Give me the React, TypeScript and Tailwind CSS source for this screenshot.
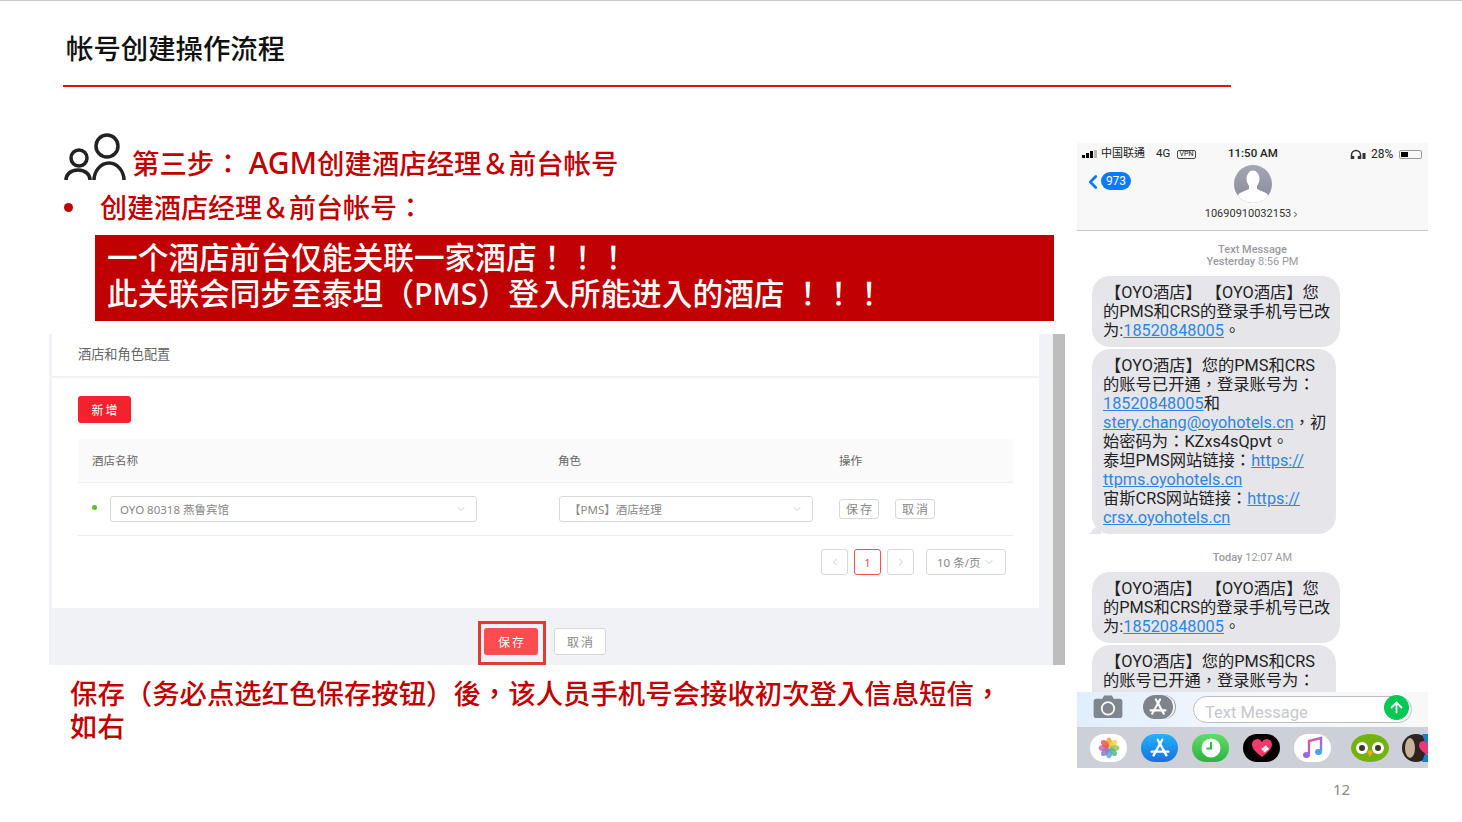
import { ArrowUp, ChevronDown, ChevronLeft, ChevronRight } from 'lucide-react';

const cjk = 'font-["Noto_Sans","Noto_Sans_CJK_TC",sans-serif]';
const admin = 'font-["Noto_Sans","Noto_Sans_CJK_SC",sans-serif]';
const ios = 'font-["Roboto","Noto_Sans_CJK_TC",sans-serif]';

function GroupIcon() {
  return (
    <svg width="63" height="47" viewBox="0 0 63 47" fill="none" stroke="#222" strokeWidth="3.500">
      <circle cx="16" cy="25" r="8" />
      <circle cx="44" cy="13" r="11" />
      <path d="M3 47c0-5 4-10 12-10s12 5 12 10" />
      <path d="M31 47c0-8 6-17 15-17s15 9 15 17" />
    </svg>
  );
}

function AppStoreGlyph({ color = 'white', size = 22 }: { color?: string; size?: number }) {
  return (
    <svg width={size} height={size} viewBox="0 0 24 24" fill="none" stroke={color} strokeWidth="2.600" strokeLinecap="round">
      <path d="M14.500 3 5 20" />
      <path d="M9.500 3 19 20" />
      <path d="M3 16h18" />
    </svg>
  );
}

function CameraGlyph() {
  return (
    <svg className="-mt-[7px]" width="30" height="23" viewBox="0 0 30 24">
      <path d="M3 4h6l2-3.500h8L21 4h6a3 3 0 0 1 3 3v14a3 3 0 0 1-3 3H3a3 3 0 0 1-3-3V7a3 3 0 0 1 3-3Z" fill="#80868e" />
      <circle cx="15" cy="14" r="6.500" fill="none" stroke="white" strokeWidth="1.800" />
    </svg>
  );
}

function PhotosGlyph() {
  const petals = ['#f0a33a', '#f5d33e', '#9bc94b', '#57b98a', '#5aa8dc', '#8a7ac8', '#c468a8', '#e8584f'];
  return (
    <svg width="22" height="22" viewBox="0 0 24 24">
      {petals.map((c, i) => (
        <ellipse key={c} cx="12" cy="6" rx="3.400" ry="5.400" fill={c} opacity="0.85" transform={`rotate(${i * 45} 12 12)`} />
      ))}
    </svg>
  );
}

function HeartGlyph() {
  return (
    <svg width="22" height="20" viewBox="0 0 24 22">
      <path d="M12 21C5 15.500 1 12 1 7a5.800 5.800 0 0 1 11-2.500A5.800 5.800 0 0 1 23 7c0 5-4 8.500-11 14Z" fill="#f2386c" />
      <path d="m12 13 5-4m-3 6 5-4" stroke="white" strokeWidth="2.500" />
    </svg>
  );
}

function MusicGlyph() {
  return (
    <svg width="24" height="24" viewBox="0 0 24 24">
      <defs>
        <linearGradient id="note" x1="0" y1="0" x2="1" y2="1">
          <stop offset="0" stopColor="#f2557a" />
          <stop offset="0.6" stopColor="#a066e0" />
          <stop offset="1" stopColor="#4aa0ec" />
        </linearGradient>
      </defs>
      <path d="M8 18V5l12-3v13" fill="none" stroke="url(#note)" strokeWidth="2.400" />
      <ellipse cx="5.500" cy="19" rx="3.500" ry="3" fill="#9a66e4" />
      <ellipse cx="17.500" cy="16" rx="3.500" ry="3" fill="#4aa0ec" />
    </svg>
  );
}

function OwlGlyph() {
  return (
    <svg width="38" height="28" viewBox="0 0 38 28">
      <ellipse cx="19" cy="14" rx="19" ry="14" fill="#74b30f" />
      <circle cx="11" cy="14" r="6" fill="white" />
      <circle cx="27" cy="14" r="6" fill="white" />
      <circle cx="11" cy="14" r="3" fill="#3a3a2a" />
      <circle cx="27" cy="14" r="3" fill="#3a3a2a" />
      <path d="m16 18 3-2 3 2-3 5Z" fill="#f5a623" />
    </svg>
  );
}

function MixedGlyph() {
  return (
    <svg width="38" height="28" viewBox="0 0 38 28">
      <ellipse cx="14" cy="14" rx="14" ry="14" fill="#2d2320" />
      <ellipse cx="8" cy="14" rx="5" ry="10" fill="#c9b29c" />
      <path d="M20 0h10l-5 14 5 14H20l5-14Z" fill="#1583cc" />
      <path d="M25 21c-5-4-8-6-8-10a4.200 4.200 0 0 1 8-1.500 4.200 4.200 0 0 1 8 1.500c0 4-3 6-8 10Z" fill="#f0357a" />
    </svg>
  );
}

function Avatar() {
  return (
    <div className="w-[38px] h-[38px] rounded-full bg-gradient-to-b from-[#a4a8b4] to-[#868a98] overflow-hidden">
      <svg width="38" height="38" viewBox="0 0 38 38" fill="white">
        <ellipse cx="19" cy="14" rx="6.500" ry="8.500" />
        <path d="M15 20h8v4l9 4c2 1 3 5 3 10H3c0-5 1-9 3-10l9-4Z" />
      </svg>
    </div>
  );
}

function Link({ children }: { children: string }) {
  return <span className="text-[#2f86e0] underline">{children}</span>;
}

function Bubble({ children, width, tail }: { children: React.ReactNode; width: string; tail?: boolean }) {
  return (
    <div className={`relative ${width} shrink-0 rounded-[18px] bg-[#e5e5ea] px-[11px] py-[7px] text-[16.300px] leading-[19px] text-[#222] whitespace-pre`}>
      {children}
      {tail && (
        <svg className="absolute left-[-5px] bottom-0" width="14" height="9" viewBox="0 0 14 9" fill="#e5e5ea">
          <path d="M0 9c3 0 5-2 6-5l8-4v9Z" />
        </svg>
      )}
    </div>
  );
}

function Stamp({ children }: { children: React.ReactNode }) {
  return <div className="text-center text-[11px] leading-[12px] text-[#9a9aa0]">{children}</div>;
}

function FirstNotice() {
  return (
    <Bubble width="w-[248px]">
      <div className="pl-[2px]">【OYO酒店】 【OYO酒店】您</div>
      <div>的PMS和CRS的登录手机号已改</div>
      <div>为:<Link>18520848005</Link>。</div>
    </Bubble>
  );
}

function PhoneShot() {
  const dock = [
    { bg: 'bg-white', icon: <PhotosGlyph /> },
    { bg: 'bg-gradient-to-b from-[#27b2f8] to-[#1a6fe0]', icon: <AppStoreGlyph /> },
    { bg: 'bg-gradient-to-b from-[#5fdc6a] to-[#28b43e]', icon: (
      <svg width="20" height="20" viewBox="0 0 20 20">
        <circle cx="10" cy="10" r="9.500" fill="white" />
        <path d="M10 4v6.500H5.500" fill="none" stroke="#2fbb45" strokeWidth="2" />
      </svg>
    ) },
    { bg: 'bg-black', icon: <HeartGlyph /> },
    { bg: 'bg-white', icon: <MusicGlyph /> },
  ];

  return (
    <div className={`w-[351px] h-[625px] flex flex-col overflow-hidden bg-white ${ios}`}>
      <div className="h-[88px] shrink-0 bg-[#f8f8f8] border-b border-[#c8c8c8] flex flex-col">
        <div className="flex h-[21px] pt-[1px] items-center pl-[5px] pr-[6px] text-[11.500px] text-[#222] whitespace-nowrap">
          <div className="flex items-end gap-[1px] h-[8px]">
            <span className="w-[3px] h-[3px] bg-black" />
            <span className="w-[3px] h-[5px] bg-black" />
            <span className="w-[3px] h-[7px] bg-black" />
            <span className="w-[3px] h-[8px] bg-[#b8b8b8]" />
          </div>
          <span className="ml-[4px] w-[45px] text-[11px]">中国联通</span>
          <span className="ml-[10px] w-[15px]">4G</span>
          <span className="ml-[6px] w-[19px] h-[9px] border border-[#444] rounded-[2px] text-[7px] leading-[7px] text-center">VPN</span>
          <span className="ml-[32px] w-[50px] font-medium">11:50 AM</span>
          <svg className="ml-[72px]" width="16" height="11" viewBox="0 0 16 11" fill="none" stroke="#333" strokeWidth="1.500">
            <path d="M1.500 10V6a4.500 4.500 0 0 1 9 0v4" />
            <path d="M3 7v3M9 7v3" strokeWidth="2.500" />
            <path d="M14 4v6" strokeWidth="3" />
          </svg>
          <span className="ml-[5px] w-[24px] text-[12px]">28%</span>
          <div className="ml-[4px] w-[23px] h-[9px] border border-[#999] rounded-[2px] p-[1px]">
            <div className="w-[7px] h-full bg-black" />
          </div>
        </div>
        <div className="grid grid-cols-3 flex-1">
          <div className="flex items-start pl-[8px] pt-[8px]">
            <ChevronLeft className="w-[22px] h-[22px] text-[#0a7aff] -ml-[3px] -mt-[1px]" strokeWidth={3} />
            <span className="-ml-[3px] w-[30px] h-[18px] rounded-full bg-[#0a7aff] text-white text-[12px] leading-[18px] text-center">973</span>
          </div>
          <div className="flex flex-col items-center pt-[1px]">
            <Avatar />
            <div className="mt-[5px] flex items-center text-[11px] leading-[12px] text-[#333] whitespace-nowrap">
              10690910032153
              <ChevronRight className="w-[9px] h-[9px] text-[#888]" strokeWidth={3} />
            </div>
          </div>
        </div>
      </div>

      <div className="h-[461px] shrink-0 overflow-hidden px-[15px] pt-[13px] flex flex-col">
        <Stamp><b className="font-medium">Text Message</b></Stamp>
        <Stamp><b className="font-medium">Yesterday</b> 8:56 PM</Stamp>
        <div className="mt-[8px] flex flex-col gap-[2px]">
          <FirstNotice />
          <Bubble width="w-[244px]" tail>
            <div className="pl-[2px]">【OYO酒店】您的PMS和CRS</div>
            <div>的账号已开通，登录账号为：</div>
            <div><Link>18520848005</Link>和</div>
            <div><Link>stery.chang@oyohotels.cn</Link>，初</div>
            <div>始密码为：KZxs4sQpvt。</div>
            <div>泰坦PMS网站链接：<Link>https://</Link></div>
            <div><Link>ttpms.oyohotels.cn</Link></div>
            <div>宙斯CRS网站链接：<Link>https://</Link></div>
            <div><Link>crsx.oyohotels.cn</Link></div>
          </Bubble>
        </div>
        <div className="mt-[18px]">
          <Stamp><b className="font-medium">Today</b> 12:07 AM</Stamp>
        </div>
        <div className="mt-[8px] flex flex-col gap-[2px]">
          <FirstNotice />
          <Bubble width="w-[244px]">
            <div className="pl-[2px]">【OYO酒店】您的PMS和CRS</div>
            <div>的账号已开通，登录账号为：</div>
            <div>&nbsp;</div>
          </Bubble>
        </div>
      </div>

      <div className="h-[35px] shrink-0 bg-gradient-to-r from-[#e0eefc] via-[#f4f8fc] to-[#f8f8f8] flex items-center pl-[16px]">
        <CameraGlyph />
        <div className="ml-[20px] w-[30px] h-[24px] rounded-full bg-[#7e838c] flex items-center justify-center -mt-[6px] shadow-[2px_0_0_#f8f8f8,3px_0_0_#9a9ea6]">
          <AppStoreGlyph size={20} />
        </div>
        <div className="ml-[20px] w-[219px] h-[27px] rounded-full border border-[#bcbcc0] bg-white flex items-center justify-between pl-[11px] text-[16.500px] text-[#c7c7cc]">
          <span className="pt-[8px]">Text Message</span>
          <span className="w-[25px] h-[25px] -mt-[5px] mr-[2px] rounded-full bg-[#00c853] flex items-center justify-center">
            <ArrowUp className="w-[17px] h-[17px] text-white" strokeWidth={2.500} />
          </span>
        </div>
      </div>

      <div className="h-[41px] shrink-0 bg-[#cdd0d6] flex items-center pl-[13px]">
        {dock.map((d, i) => (
          <div key={i} className={`w-[37px] h-[28px] mr-[14px] shrink-0 rounded-full flex items-center justify-center ${d.bg}`}>
            {d.icon}
          </div>
        ))}
        <span className="w-[1px] h-[24px] bg-[#aaaeb4] mr-[9px] -ml-[3px]" />
        <div className="shrink-0 mr-[13px]"><OwlGlyph /></div>
        <div className="shrink-0"><MixedGlyph /></div>
      </div>
    </div>
  );
}

function SelectBox({ width, label }: { width: string; label: string }) {
  return (
    <div className={`${width} h-[26px] rounded-[3px] border border-[#d9d9d9] flex items-center justify-between pl-[9px] pr-[9px] text-[11.500px] text-[#888]`}>
      <span className="pt-[1px]">{label}</span>
      <ChevronDown className="w-[12px] h-[12px] text-[#bbb]" strokeWidth={1.500} />
    </div>
  );
}

function Btn({ label }: { label: string }) {
  return (
    <div className="w-[40px] h-[20px] pl-[2px] rounded-[3px] border border-[#d9d9d9] text-[12px] leading-[19px] tracking-[2px] text-center text-[#888] bg-white">{label}</div>
  );
}

function AdminShot() {
  return (
    <div className={`w-[1016px] h-[331px] flex bg-[#f0f2f5] ${admin}`}>
      <div className="flex-1 flex flex-col pl-[3px]">
        <div className="w-[987px] h-[274px] shrink-0 bg-white">
          <div className="h-[44px] border-b-2 border-[#f0f2f5] pl-[26px] pt-[9px] text-[13.200px] leading-[22px] text-[#666]">酒店和角色配置</div>
          <div className="px-[26px]">
            <div className="mt-[18px] w-[53px] h-[27px] pl-[2px] rounded-[3px] bg-[#f5222d] text-white text-[12px] leading-[29px] tracking-[2px] text-center">新增</div>
            <div className="mt-[16px] h-[44px] bg-[#fafafa] border-b border-[#eeeeee] flex items-center pl-[14px] pt-[1px] text-[11.500px] text-[#666]">
              <span className="w-[466px]">酒店名称</span>
              <span className="w-[281px]">角色</span>
              <span>操作</span>
            </div>
            <div className="h-[53px] border-b border-[#eeeeee] flex items-center pl-[14px]">
              <span className="w-[5px] h-[5px] rounded-full bg-[#52c41a] -mt-[4px]" />
              <div className="ml-[13px]"><SelectBox width="w-[367px]" label="OYO 80318 燕鲁宾馆" /></div>
              <div className="ml-[82px]"><SelectBox width="w-[254px]" label="【PMS】酒店经理" /></div>
              <div className="ml-[26px] flex gap-[16px]">
                <Btn label="保存" />
                <Btn label="取消" />
              </div>
            </div>
            <div className="mt-[13px] flex justify-end items-center pr-[7px] text-[11.500px] text-[#888]">
              <div className="w-[27px] h-[26px] rounded-[3px] border border-[#d9d9d9] flex items-center justify-center">
                <ChevronLeft className="w-[12px] h-[12px] text-[#bbb]" strokeWidth={1.500} />
              </div>
              <div className="ml-[6px] w-[27px] h-[26px] rounded-[3px] border border-[#ff4d4f] text-[#ff4d4f] leading-[26px] text-center">1</div>
              <div className="ml-[6px] w-[27px] h-[26px] rounded-[3px] border border-[#d9d9d9] flex items-center justify-center">
                <ChevronRight className="w-[12px] h-[12px] text-[#bbb]" strokeWidth={1.500} />
              </div>
              <div className="ml-[12px] w-[80px] h-[26px] rounded-[3px] border border-[#d9d9d9] flex items-center justify-between px-[10px]">
                <span className="pt-[1px]">10 条/页</span>
                <ChevronDown className="w-[12px] h-[12px] text-[#bbb]" strokeWidth={1.500} />
              </div>
            </div>
          </div>
        </div>
        <div className="flex-1 flex items-end pl-[426px]">
          <div className="w-[68px] h-[44px] border-[3px] border-[#e53935] pt-[4px] pl-[3px]">
            <div className="w-[54px] h-[27px] pl-[2px] rounded-[3px] bg-[#ff4d4f] text-white text-[12px] leading-[29px] tracking-[2px] text-center">保存</div>
          </div>
          <div className="ml-[8px] mb-[10px] w-[52px] h-[27px] pl-[2px] rounded-[3px] border border-[#d9d9d9] bg-white text-[#888] text-[12px] leading-[27px] tracking-[2px] text-center">取消</div>
        </div>
      </div>
      <div className="w-[12px] bg-[#bdbdbd]" />
    </div>
  );
}

export default function App() {
  return (
    <div className={`w-[1462px] h-[822px] bg-white overflow-hidden border-t border-[#c8c8c8] ${cjk}`}>
      <div className="pl-[63px]">
        <div className="h-[84px] pt-[29px] pl-[3px] text-[27.400px] leading-[38px] font-medium text-[#111]">帐号创建操作流程</div>
        <div className="w-[1168px] h-[2px] bg-[#e01010]" />
      </div>

      <div className="flex pl-[49px] pt-[46px]">
        <div className="w-[1016px] flex flex-col text-[#c00000]">
          <div className="h-[47px] pl-[14px] flex items-end">
            <GroupIcon />
            <span className="ml-[6px] -mb-[2px] text-[27.400px] leading-[36px] font-medium whitespace-nowrap">第三步： <span className="text-[30px]">AGM</span>创建酒店经理＆前台帐号</span>
          </div>
          <div className="h-[55px] pl-[16px] flex items-start pt-[10px] text-[27px] leading-[36px] font-medium">
            <span className="w-[9px] h-[9px] mt-[13px] mr-[27px] -ml-[1px] rounded-full bg-[#c00000] shrink-0" />
            <span>创建酒店经理＆前台帐号：</span>
          </div>
          <div className="ml-[46px] w-[959px] h-[86px] bg-[#c00000] text-white pl-[12px] pt-[4px] text-[30.700px] leading-[36px] font-medium whitespace-nowrap">
            <div>一个酒店前台仅能关联一家酒店！！！</div>
            <div>此关联会同步至泰坦（PMS）登入所能进入的酒店 ！！！</div>
          </div>
          <div className="mt-[13px]"><AdminShot /></div>
          <div className="mt-[12px] pl-[21px] text-[27.400px] leading-[33px] font-medium">
            <div className="whitespace-nowrap">保存（务必点选红色保存按钮）後，该人员手机号会接收初次登入信息短信，</div>
            <div>如右</div>
          </div>
        </div>

        <div className="ml-[12px] pt-[10px] flex flex-col">
          <PhoneShot />
          <div className="mt-[11px] pl-[256px] text-[15px] leading-[20px] text-[#8b8b8b]">12</div>
        </div>
      </div>
    </div>
  );
}
